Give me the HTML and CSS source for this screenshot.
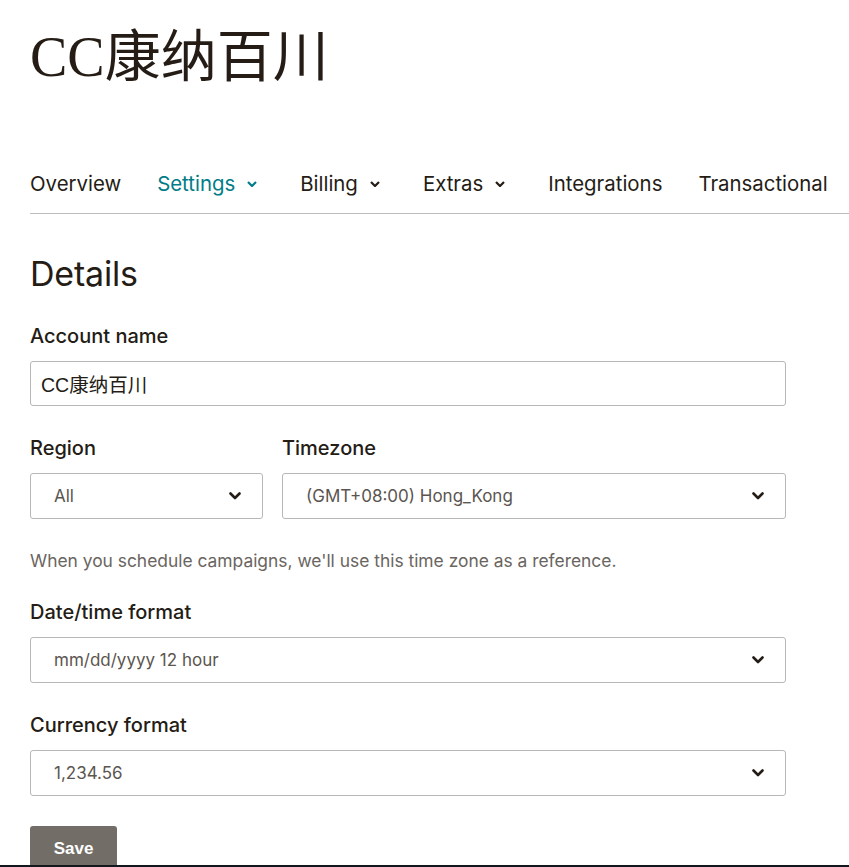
FILE: index.html
```html
<!DOCTYPE html>
<html lang="en">
<head>
<meta charset="utf-8">
<title>Account settings</title>
<link rel="stylesheet" href="styles.css">
</head>
<body>
<div class="page">
  <h1 class="title">CC康纳百川</h1>
  <nav class="tabs">
    <a class="tab">Overview</a>
    <a class="tab active">Settings <svg class="caret" viewBox="0 0 10 6" width="10" height="6"><polyline points="1,1 5,5 9,1"/></svg></a>
    <a class="tab">Billing <svg class="caret" viewBox="0 0 10 6" width="10" height="6"><polyline points="1,1 5,5 9,1"/></svg></a>
    <a class="tab">Extras <svg class="caret" viewBox="0 0 10 6" width="10" height="6"><polyline points="1,1 5,5 9,1"/></svg></a>
    <a class="tab">Integrations</a>
    <a class="tab">Transactional</a>
  </nav>
  <main class="form">
    <h2 class="section-title">Details</h2>

    <div class="field">
      <label class="label">Account name</label>
      <div class="input">CC康纳百川</div>
    </div>

    <div class="row">
      <div class="field region">
        <label class="label">Region</label>
        <div class="select"><span>All</span><svg class="chev" viewBox="0 0 12 8" width="12" height="8"><polyline points="1.5,1.5 6,6 10.5,1.5"/></svg></div>
      </div>
      <div class="field timezone">
        <label class="label">Timezone</label>
        <div class="select"><span>(GMT+08:00) Hong_Kong</span><svg class="chev" viewBox="0 0 12 8" width="12" height="8"><polyline points="1.5,1.5 6,6 10.5,1.5"/></svg></div>
      </div>
    </div>
    <p class="help">When you schedule campaigns, we'll use this time zone as a reference.</p>

    <div class="field">
      <label class="label">Date/time format</label>
      <div class="select"><span>mm/dd/yyyy 12 hour</span><svg class="chev" viewBox="0 0 12 8" width="12" height="8"><polyline points="1.5,1.5 6,6 10.5,1.5"/></svg></div>
    </div>

    <div class="field">
      <label class="label">Currency format</label>
      <div class="select"><span>1,234.56</span><svg class="chev" viewBox="0 0 12 8" width="12" height="8"><polyline points="1.5,1.5 6,6 10.5,1.5"/></svg></div>
    </div>

    <button class="save">Save</button>
  </main>
</div>
<div class="taskbar"></div>
</body>
</html>
```

FILE: styles.css
```css
html, body {
  margin: 0;
  padding: 0;
  background: #ffffff;
}
body {
  font-family: Inter, "Noto Sans", "Noto Sans CJK SC", sans-serif;
  color: #241c15;
  overflow: hidden;
  height: 867px;
}
.page {
  padding-left: 30px;
}
.title {
  margin: 0;
  padding-top: 22px;
  font-family: "Liberation Serif", "Noto Sans CJK SC", serif;
  font-weight: 400;
  font-size: 56px;
  line-height: 70px;
  color: #241c15;
}
.tabs {
  display: flex;
  align-items: center;
  margin-top: 64px;
  height: 58px;
  border-bottom: 1px solid #bdbdbd;
  box-sizing: border-box;
}
.tab {
  display: flex;
  align-items: center;
  font-size: 20.4px;
  color: #241c15;
  margin-right: 36px;
  white-space: nowrap;
  padding-bottom: 2px;
}
.tab .caret {
  margin-left: 12px;
  margin-right: 7px;
  fill: none;
  stroke: #241c15;
  stroke-width: 2.2;
}
.tab.active {
  color: #007c89;
}
.tab.active .caret {
  stroke: #007c89;
}
.form {
  width: 756px;
  padding-top: 38px;
}
.section-title {
  margin: 0 0 28px;
  font-size: 34px;
  font-weight: 400;
  line-height: 44px;
  letter-spacing: -0.2px;
}
.field {
  display: flex;
  flex-direction: column;
  margin-bottom: 30px;
}
.label {
  font-size: 20px;
  font-weight: 500;
  line-height: 24px;
  margin-bottom: 13px;
}
.input {
  height: 45px;
  box-sizing: border-box;
  border: 1px solid #b7b7b7;
  border-radius: 3px;
  padding-left: 10px;
  display: flex;
  align-items: center;
  font-family: "Liberation Sans", "Noto Sans CJK SC", sans-serif;
  font-size: 19.5px;
  color: #241c15;
}
.row {
  display: flex;
  gap: 19px;
}
.row .field {
  margin-bottom: 0;
}
.region {
  width: 233px;
}
.timezone {
  flex: 1;
}
.select {
  height: 46px;
  box-sizing: border-box;
  border: 1px solid #b7b7b7;
  border-radius: 3px;
  padding: 0 21px 0 23px;
  display: flex;
  align-items: center;
  justify-content: space-between;
  font-size: 17px;
  color: #5b5550;
}
.chev {
  fill: none;
  stroke: #241c15;
  stroke-width: 2.6;
  stroke-linecap: round;
  stroke-linejoin: round;
}
.help {
  margin: 30px 0 27px;
  font-size: 17.4px;
  line-height: 24px;
  color: #6a6560;
}
.save {
  margin-top: 0;
  width: 87px;
  height: 46px;
  border: none;
  border-radius: 3px;
  background: #736d67;
  color: #ffffff;
  font-family: "Liberation Sans", Arial, sans-serif;
  font-weight: 700;
  font-size: 17px;
  padding: 0;
}
.taskbar {
  position: fixed;
  left: 0;
  right: 0;
  bottom: 0;
  height: 2px;
  background: #14181c;
}
```
